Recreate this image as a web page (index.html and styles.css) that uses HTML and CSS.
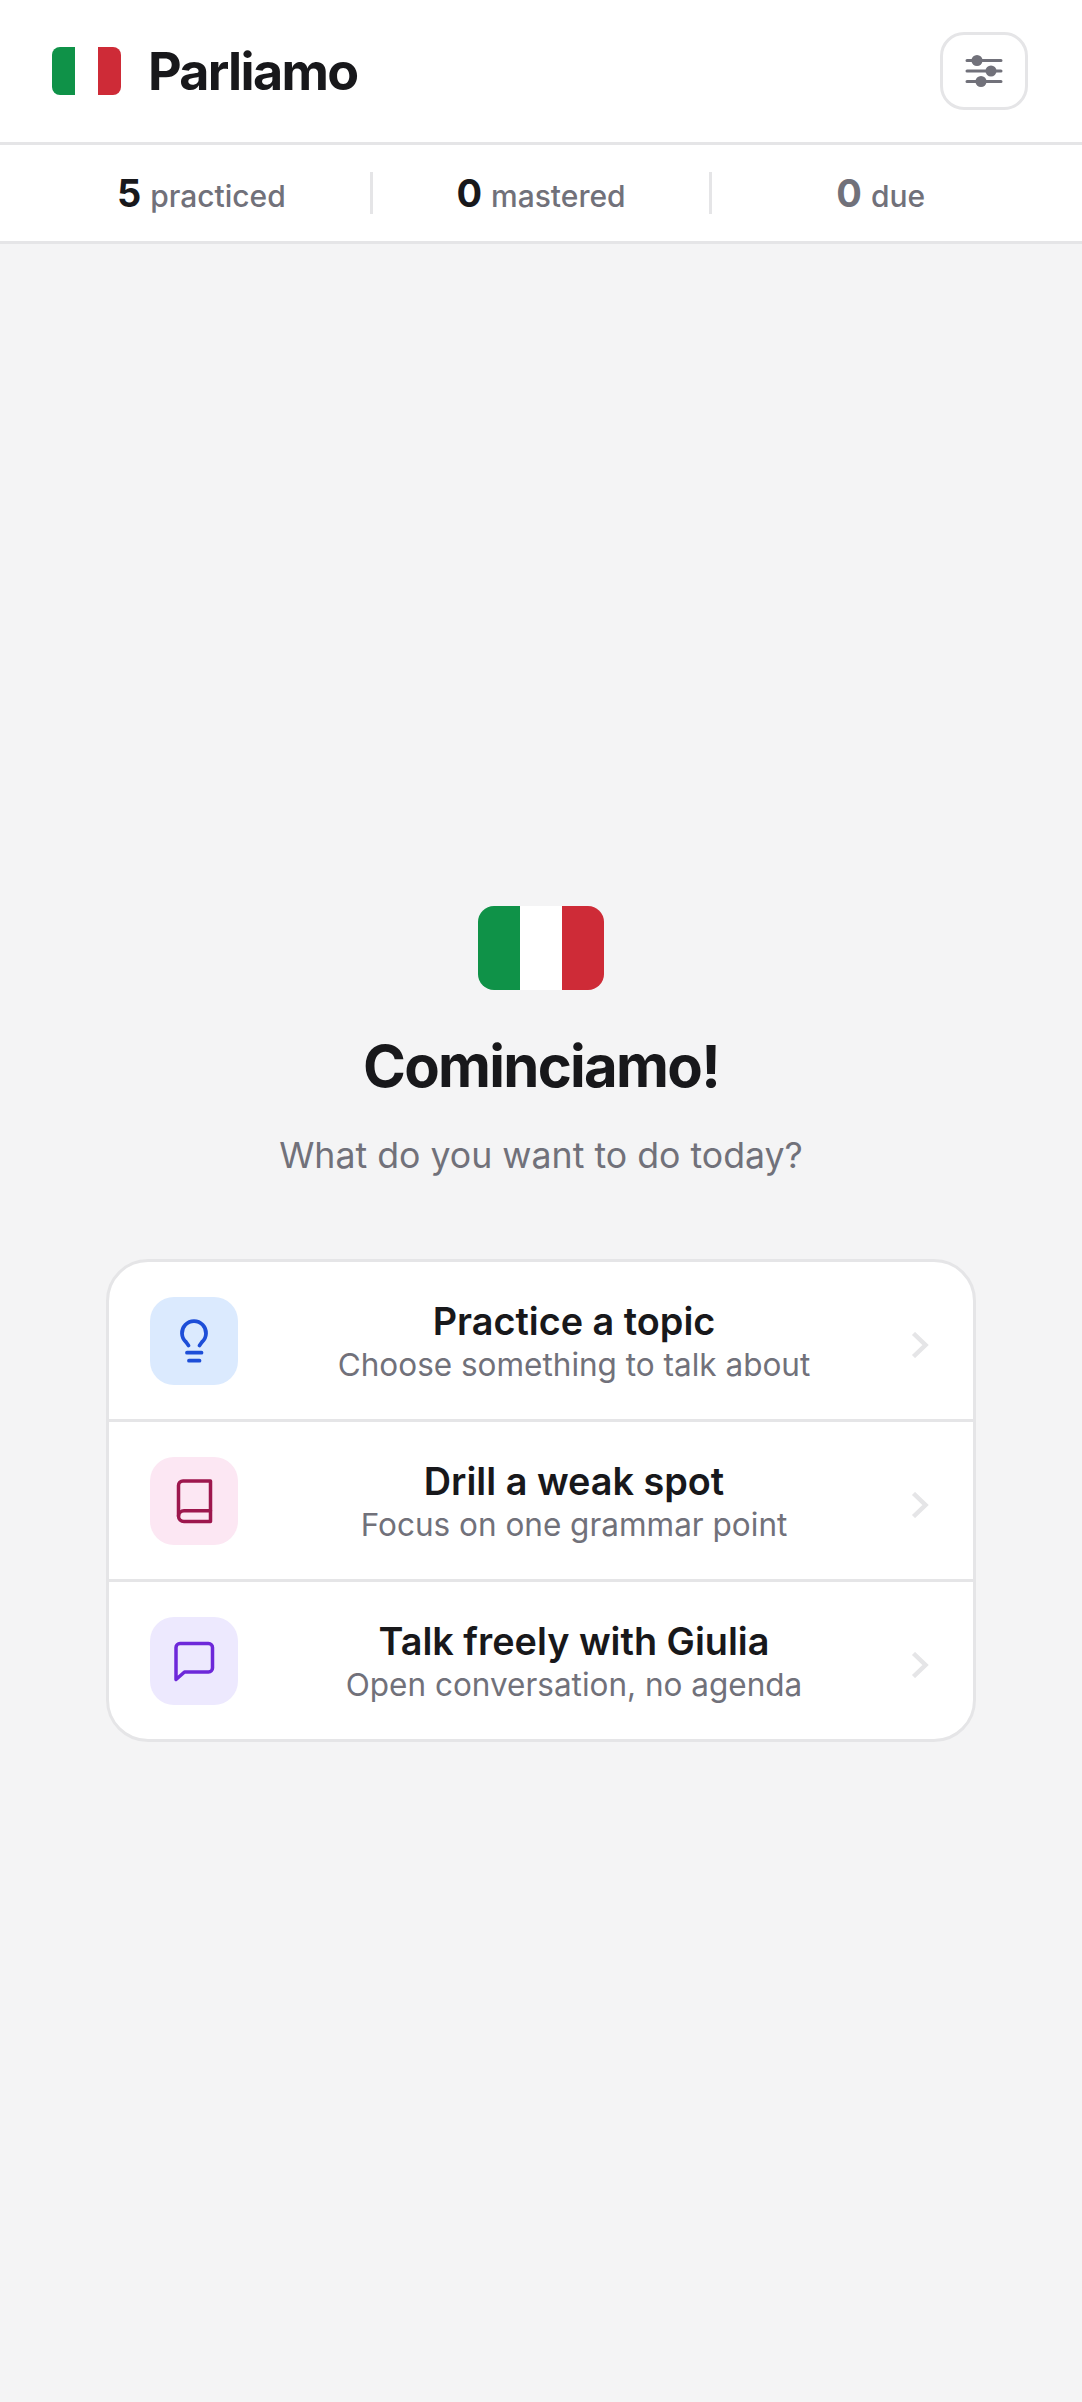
FILE: index.html
```html
<!DOCTYPE html>
<html lang="en">

<head>
    <meta charset="UTF-8">
    <meta name="viewport" content="width=device-width, initial-scale=1.0">
    <title>Parliamo</title>
    <link rel="stylesheet" href="styles.css">
</head>

<body>

    <header class="topbar">
        <div class="brand">
            <div class="flag flag-small"><span class="green"></span><span class="white"></span><span class="red"></span></div>
            <h1 class="brand-name">Parliamo</h1>
        </div>
        <button class="settings" type="button" aria-label="Settings">
            <svg width="40" height="40" viewBox="0 0 40 40" fill="none" stroke="#71717a" stroke-width="3" stroke-linecap="round">
                <path d="M3 9.5h34M3 20h34M3 30.5h34" />
                <circle cx="13" cy="9.5" r="5.5" fill="#71717a" stroke="none" />
                <circle cx="27" cy="20" r="5.5" fill="#71717a" stroke="none" />
                <circle cx="17" cy="30.5" r="5.5" fill="#71717a" stroke="none" />
            </svg>
        </button>
    </header>

    <section class="stats">
        <div class="stat"><b>5</b> <span>practiced</span></div>
        <div class="stat-line"></div>
        <div class="stat"><b>0</b> <span>mastered</span></div>
        <div class="stat-line"></div>
        <div class="stat stat-muted"><b>0</b> <span>due</span></div>
    </section>

    <main class="home">
        <div class="flag flag-big"><span class="green"></span><span class="white"></span><span class="red"></span></div>
        <h2 class="home-title">Cominciamo!</h2>
        <p class="home-sub">What do you want to do today?</p>

        <div class="menu">
            <a class="menu-row" href="#">
                <div class="tile tile-blue">
                    <svg width="88" height="88" viewBox="0 0 88 88" fill="none" stroke="#1d4ed8" stroke-width="3.8" stroke-linecap="round" stroke-linejoin="round">
                        <path d="M38.5 48.5 36 45A12 12 0 1 1 52 45L49.5 48.5" />
                        <path d="M37 55.7h14.5M39 63.7h10.5" />
                    </svg>
                </div>
                <div class="menu-text">
                    <div class="menu-title">Practice a topic</div>
                    <div class="menu-sub">Choose something to talk about</div>
                </div>
                <svg class="chevron" width="18" height="26" viewBox="0 0 18 26" fill="none" stroke="#e5e5e7" stroke-width="4.5">
                    <path d="M2.500 1.500 14.500 13 2.500 24.500" />
                </svg>
            </a>
            <a class="menu-row" href="#">
                <div class="tile tile-pink">
                    <svg width="88" height="88" viewBox="0 0 88 88" fill="none" stroke="#9d174d" stroke-width="3.5" stroke-linecap="round" stroke-linejoin="round">
                        <path d="M60.500 24H33a4.500 4.500 0 0 0-4.500 4.500V59a5.500 5.500 0 0 0 5.500 5.500H60.500Z" />
                        <path d="M28.500 59a5.500 5.500 0 0 1 5.500-5.300H60.500" />
                    </svg>
                </div>
                <div class="menu-text">
                    <div class="menu-title">Drill a weak spot</div>
                    <div class="menu-sub">Focus on one grammar point</div>
                </div>
                <svg class="chevron" width="18" height="26" viewBox="0 0 18 26" fill="none" stroke="#e5e5e7" stroke-width="4.5">
                    <path d="M2.500 1.500 14.500 13 2.500 24.500" />
                </svg>
            </a>
            <a class="menu-row" href="#">
                <div class="tile tile-purple">
                    <svg width="88" height="88" viewBox="0 0 88 88" fill="none" stroke="#6d28d9" stroke-width="3.5" stroke-linecap="round" stroke-linejoin="round">
                        <path d="M26 62.500V30.500a4 4 0 0 1 4-4H58.500a4 4 0 0 1 4 4V51a4 4 0 0 1-4 4H34.500Z" />
                    </svg>
                </div>
                <div class="menu-text">
                    <div class="menu-title">Talk freely with Giulia</div>
                    <div class="menu-sub">Open conversation, no agenda</div>
                </div>
                <svg class="chevron" width="18" height="26" viewBox="0 0 18 26" fill="none" stroke="#e5e5e7" stroke-width="4.5">
                    <path d="M2.500 1.500 14.500 13 2.500 24.500" />
                </svg>
            </a>
        </div>
    </main>

</body>

</html>
```

FILE: styles.css
```css
* {
    box-sizing: border-box;
}

html,
body {
    height: 100%;
}

body {
    margin: 0;
    display: flex;
    flex-direction: column;
    background-color: #f4f4f5;
    color: #18181b;
    font-family: Inter, "Liberation Sans", sans-serif;
}


/* Top bar */

.topbar {
    height: 145px;
    padding: 0 54px 0 52px;
    display: flex;
    align-items: center;
    justify-content: space-between;
    background-color: #fff;
    border-bottom: 3px solid #e5e5e7;
}

.brand {
    display: flex;
    align-items: center;
    gap: 27px;
}

.brand-name {
    margin: 0;
    font-size: 52px;
    font-weight: 700;
    letter-spacing: -1.7px;
}

.settings {
    width: 88px;
    height: 78px;
    padding: 0;
    display: flex;
    align-items: center;
    justify-content: center;
    background-color: #fff;
    border: 3px solid #e5e5e7;
    border-radius: 24px;
}


/* Flag */

.flag {
    display: flex;
    overflow: hidden;
}

.flag span {
    flex: 1;
}

.flag .green {
    background-color: #0f9248;
}

.flag .white {
    background-color: #fff;
}

.flag .red {
    background-color: #ce2b37;
}

.flag-small {
    width: 69px;
    height: 48px;
    border-radius: 8px;
}

.flag-big {
    width: 126px;
    height: 84px;
    border-radius: 16px;
}


/* Stats */

.stats {
    height: 99px;
    padding: 0 33px;
    display: flex;
    align-items: center;
    background-color: #fff;
    border-bottom: 3px solid #e5e5e7;
}

.stat {
    flex: 1;
    text-align: center;
    font-size: 30px;
    font-weight: 500;
    color: #71717a;
}

.stat b {
    margin-right: 1px;
    font-size: 38px;
    font-weight: 700;
    color: #18181b;
}

.stat-muted b {
    color: #71717a;
}

.stat-line {
    width: 3px;
    height: 42px;
    background-color: #e5e5e7;
}


/* Main */

.home {
    flex: 1;
    padding: 2px 106px 0;
    display: flex;
    flex-direction: column;
    align-items: center;
    justify-content: center;
}

.home-title {
    margin: 41px 0 0;
    font-size: 58px;
    font-weight: 700;
    letter-spacing: -1.7px;
}

.home-sub {
    margin: 32px 0 82px;
    font-size: 35.7px;
    color: #71717a;
}

.menu {
    width: 100%;
    background-color: #fff;
    border: 3px solid #e5e5e7;
    border-radius: 42px;
}

.menu-row {
    height: 160px;
    padding: 0 44px 0 41px;
    display: flex;
    align-items: center;
    gap: 28px;
    color: inherit;
    text-decoration: none;
    border-bottom: 3px solid #e5e5e7;
}

.menu-row:last-child {
    height: 157px;
    border-bottom: none;
}

.tile {
    width: 88px;
    height: 88px;
    flex-shrink: 0;
    border-radius: 24px;
}

.tile svg {
    display: block;
}

.tile-blue {
    background-color: #dbeafe;
}

.tile-pink {
    background-color: #fce7f3;
}

.tile-purple {
    background-color: #ede9fe;
}

.menu-text {
    flex: 1;
    padding-right: 1px;
    text-align: center;
}

.menu-title {
    font-size: 37.8px;
    font-weight: 600;
}

.menu-sub {
    margin-top: 1px;
    font-size: 31.5px;
    color: #71717a;
}

.chevron {
    flex-shrink: 0;
    margin-top: 8px;
}
```
